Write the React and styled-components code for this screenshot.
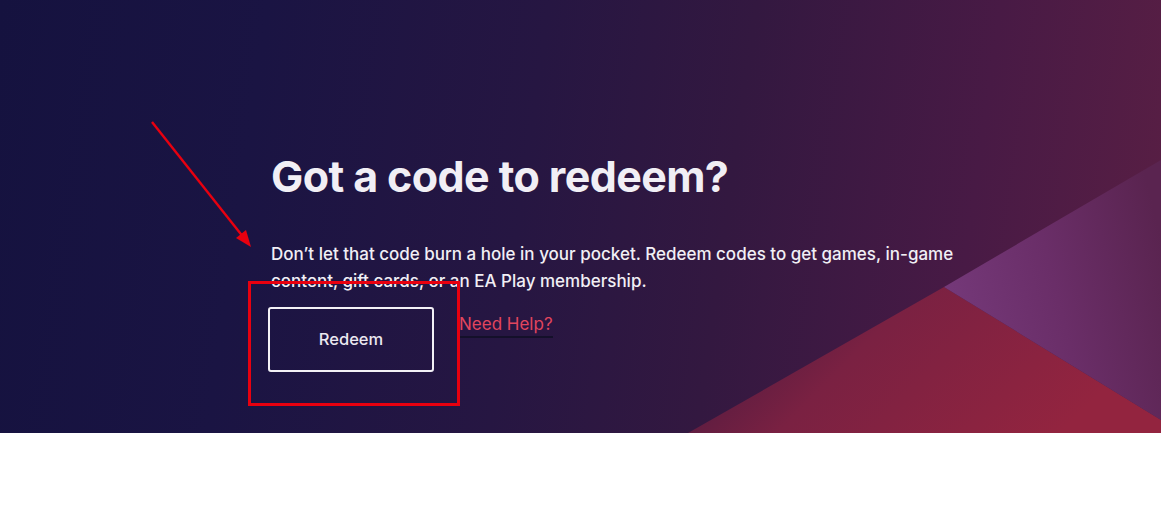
import React from "react";
import styled, { createGlobalStyle } from "styled-components";

const Global = createGlobalStyle`
  html, body {
    margin: 0;
    padding: 0;
    background: #ffffff;
  }
  body {
    font-family: Inter, "Noto Sans", sans-serif;
    -webkit-font-smoothing: antialiased;
  }
`;

const Hero = styled.section`
  position: relative;
  height: 433px;
  overflow: hidden;
  background: linear-gradient(
    98deg,
    #15123f 0%,
    #1a1443 22%,
    #261642 45%,
    #331840 62%,
    #481a45 82%,
    #5a1f44 100%
  );
`;

const Shapes = styled.svg`
  position: absolute;
  right: 0;
  bottom: 0;
  width: 480px;
  height: 280px;
`;

const Content = styled.div`
  position: relative;
  padding: 151px 0 0 271px;
  max-width: 720px;
  color: #f1eff5;
`;

const Title = styled.h1`
  margin: 0;
  font-size: 43px;
  font-weight: 700;
  line-height: 1.2;
  letter-spacing: -0.6px;
`;

const Text = styled.p`
  margin: 38px 0 0;
  font-size: 17px;
  line-height: 27px;
  font-weight: 500;
`;

const Actions = styled.div`
  display: flex;
  align-items: center;
  gap: 25px;
  margin: 12px 0 0 -3px;
`;

const Button = styled.button`
  width: 166px;
  height: 65px;
  border: 2px solid #f3f1f6;
  border-radius: 3px;
  background: transparent;
  color: #ebe8f0;
  font-family: inherit;
  font-size: 16.5px;
  font-weight: 500;
  cursor: pointer;
`;

const Help = styled.a`
  margin-top: -26px;
  color: #e2455e;
  font-size: 17px;
  font-weight: 400;
  text-decoration: none;
  padding-bottom: 2px;
  border-bottom: 2px solid #14102a;
  cursor: pointer;
`;

const Mark = styled.div`
  position: absolute;
  left: 248px;
  top: 281px;
  width: 206px;
  height: 119px;
  border: 3px solid #e8000f;
  pointer-events: none;
`;

const Arrow = styled.svg`
  position: absolute;
  left: 140px;
  top: 110px;
  width: 130px;
  height: 150px;
  pointer-events: none;
`;

export default function App() {
  return (
    <>
      <Global />
      <Hero>
        <Shapes viewBox="0 0 480 280" preserveAspectRatio="none">
          <defs>
            <linearGradient id="red" x1="0" y1="0" x2="1" y2="0.3">
              <stop offset="0" stopColor="#3a173f" />
              <stop offset="0.45" stopColor="#7a2142" />
              <stop offset="1" stopColor="#93243f" />
            </linearGradient>
            <linearGradient id="violet" x1="0" y1="0.6" x2="1" y2="0.3">
              <stop offset="0" stopColor="#75397a" />
              <stop offset="0.5" stopColor="#6a2e68" />
              <stop offset="1" stopColor="#5a2450" />
            </linearGradient>
          </defs>
          <polygon points="7,280 263,134 480,267 480,280" fill="url(#red)" />
          <polygon points="263,134 480,7 480,267" fill="url(#violet)" />
        </Shapes>
        <Content>
          <Title>Got a code to redeem?</Title>
          <Text>
            Don’t let that code burn a hole in your pocket. Redeem codes to get
            games, in-game content, gift cards, or an EA Play membership.
          </Text>
          <Actions>
            <Button>Redeem</Button>
            <Help>Need Help?</Help>
          </Actions>
        </Content>
        <Mark />
        <Arrow viewBox="0 0 130 150">
          <line x1="12" y1="12" x2="104" y2="128" stroke="#e8000f" strokeWidth="2.4" />
          <polygon points="111,137 96,128 106,120" fill="#e8000f" />
        </Arrow>
      </Hero>
    </>
  );
}
